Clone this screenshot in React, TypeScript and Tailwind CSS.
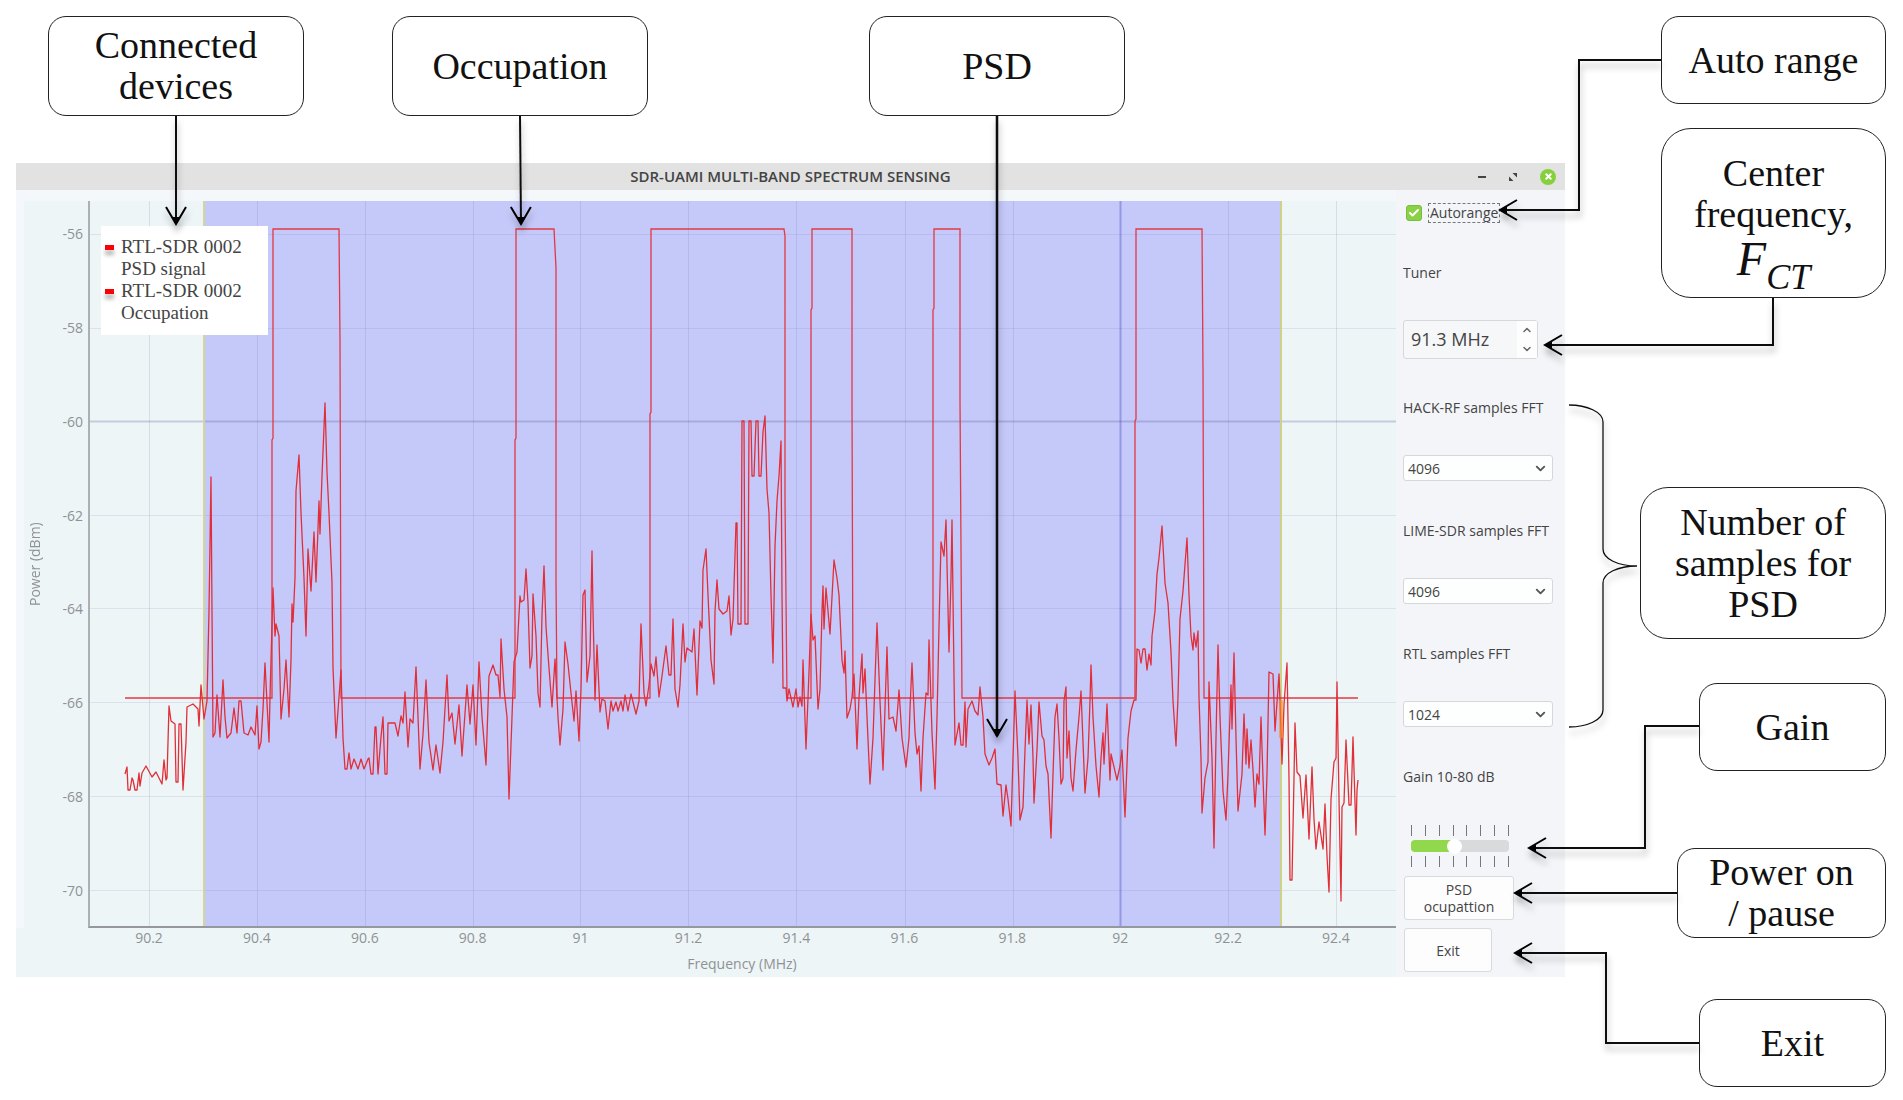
import React, { useState } from 'react';
import { ChevronDown, ChevronUp, Check, X } from 'lucide-react';

const POWER_TICKS = [
    { label: '-56', y: 234 },
    { label: '-58', y: 328 },
    { label: '-60', y: 421, major: true },
    { label: '-62', y: 515 },
    { label: '-64', y: 608 },
    { label: '-66', y: 702 },
    { label: '-68', y: 796 },
    { label: '-70', y: 890 },
];

const FREQ_TICKS = [
    { label: '90.2', x: 149 },
    { label: '90.4', x: 257 },
    { label: '90.6', x: 365 },
    { label: '90.8', x: 473 },
    { label: '91', x: 580 },
    { label: '91.2', x: 688 },
    { label: '91.4', x: 796 },
    { label: '91.6', x: 905 },
    { label: '91.8', x: 1013 },
    { label: '92', x: 1120, major: true },
    { label: '92.2', x: 1228 },
    { label: '92.4', x: 1336 },
];

const OCCUPATION =
    '125,698 272,698 272,440 273,438 273,229 339,229 340,340 341,698 515,698 515,440 516,438 516,229 ' +
    '554,229 556,268 556,580 557,698 650,698 650,414 651,412 651,229 784,229 785,236 785,500 787,698 ' +
    '811,698 811,310 812,308 812,229 852,229 852,405 853,698 933,698 933,310 934,308 934,229 ' +
    '960,229 960,400 962,698 1135,698 1135,421 1136,419 1136,229 1202,229 1203,370 1204,698 1358,698';

const PSD_SIGNAL = [
    '125,774 127,767 128,790 130,790 132,778 133,780 135,790 137,790 139,773 140,786 142,773 146,766 152,777 156,772',
    '162,784 164,760 166,780 167,778 169,706 171,721 175,724 176,782 178,782 179,724 181,724 183,790 186,742 187,707',
    '193,704 198,709 199,726 201,685 204,719 207,701 209,611 211,477 212,611 213,737 215,733 217,695 220,737 223,680',
    '225,717 227,738 231,733 234,708 237,733 239,701 241,701 244,733 248,735 251,727 255,735 257,706 259,749 261,742',
    '263,709 265,663 269,742 270,697 273,588 275,636 276,624 279,636 281,719 284,689 286,660 289,717 291,660 292,604',
    '293,622 295,578 296,491 299,455 301,513 304,578 306,636 308,549 311,591 314,532 316,582 319,501 320,534 322,476',
    '325,403 327,472 329,513 332,583 333,668 336,738 339,697 341,670 343,738 345,769 347,769 349,753 351,769 354,759',
    '358,769 361,759 364,769 368,759 369,758 371,774 373,774 375,727 376,727 378,774 381,737 383,717 385,774 387,774',
    '388,723 395,723 398,736 401,716 403,723 405,692 408,747 410,719 413,723 416,667 418,717 420,769 423,734 426,680',
    '429,742 433,770 436,745 440,773 443,742 447,675 449,721 452,713 455,744 459,705 462,756 467,685 470,724 473,685',
    '476,745 479,662 482,717 486,765 489,676 493,665 496,675 498,675 500,697 501,639 504,689 507,717 509,799 512,717',
    '514,662 517,652 520,596 521,602 524,600 526,569 528,603 530,668 532,656 533,594 536,636 538,693 540,707 542,615',
    '544,566 546,627 549,668 552,707 555,659 558,717 560,745 563,709 565,642 568,664 571,693 574,721 576,691 579,741',
    '581,689 583,595 585,590 587,682 590,656 592,551 593,611 595,700 597,645 600,712 602,699 605,701 608,729 611,701',
    '613,711 616,702 618,711 621,701 623,711 625,695 628,711 631,694 636,714 639,701 641,624 644,693 646,706 649,685',
    '651,664 654,676 656,657 659,697 662,676 666,646 669,675 671,675 673,619 675,689 678,707 680,685 683,624 685,662',
    '687,648 692,652 694,629 697,695 700,621 702,628 703,570 706,549 708,595 711,660 714,684 715,611 717,580 719,609',
    '723,614 727,611 729,596 731,635 733,619 736,523 737,523 738,624 741,624 742,421 744,421 745,624 748,624 749,421',
    '751,421 752,476 754,476 756,421 758,421 759,476 761,476 763,432 765,416 767,489 769,513 771,595 773,663 775,546',
    '777,501 779,476 781,441 782,595 783,688 786,688 787,701 789,689 793,707 796,689 798,707 800,697 802,706 803,660',
    '806,749 809,672 811,614 813,640 815,636 818,709 820,689 822,611 823,586 824,629 826,588 830,634 834,560 837,578',
    '839,595 842,660 844,673 845,651 847,718 850,709 852,697 854,674 857,749 859,697 862,654 863,693 865,669 867,717',
    '870,784 873,738 875,680 877,623 880,701 883,770 887,647 889,719 893,717 896,731 899,690 902,738 906,767 909,738',
    '910,709 912,663 915,733 917,754 919,746 921,791 923,738 926,693 928,695 929,640 932,733 935,789 937,717 939,627',
    '941,542 944,556 946,520 949,652 951,578 952,520 954,676 955,745 959,723 961,745 963,745 965,702 966,747 968,709',
    '972,701 975,711 978,715 980,687 983,717 985,754 989,765 992,758 995,749 997,784 1001,785 1003,816 1006,785',
    '1008,799 1011,826 1013,758 1015,691 1018,758 1020,820 1023,807 1025,750 1027,700 1029,744 1031,705 1033,758',
    '1034,803 1037,750 1039,702 1042,736 1044,740 1046,766 1048,774 1051,838 1053,774 1055,717 1057,704 1059,738',
    '1061,784 1063,778 1064,701 1066,687 1067,758 1069,731 1071,778 1073,791 1076,750 1079,717 1081,691 1083,742',
    '1085,793 1088,758 1090,701 1091,665 1093,717 1096,766 1099,797 1101,758 1103,733 1104,764 1107,704 1110,780',
    '1111,754 1117,780 1120,766 1122,750 1125,817 1128,738 1131,711 1134,700 1136,700 1137,649 1139,650 1141,663',
    '1143,649 1145,649 1147,670 1149,654 1151,665 1152,636 1155,611 1157,574 1159,558 1162,526 1165,583 1168,603',
    '1171,652 1173,701 1176,746 1178,697 1180,619 1183,591 1187,538 1189,595 1191,636 1193,650 1194,633 1196,647',
    '1198,631 1199,697 1201,758 1202,813 1205,778 1208,762 1209,682 1212,758 1214,848 1216,738 1218,645 1220,717',
    '1223,791 1226,820 1228,774 1231,685 1232,729 1234,653 1236,738 1238,811 1242,774 1244,714 1246,764 1247,729',
    '1249,768 1251,740 1253,770 1255,807 1257,774 1259,784 1261,717 1263,778 1265,835 1267,774 1269,672 1273,674',
    '1275,731 1279,674 1280,701 1282,764 1284,705 1287,663 1289,778 1290,880 1292,880 1294,778 1295,723 1297,772',
    '1300,776 1303,818 1306,775 1309,839 1312,767 1314,819 1316,849 1319,822 1323,849 1325,804 1327,856 1329,892',
    '1331,799 1334,762 1336,758 1337,682 1339,799 1341,901 1342,807 1344,803 1346,740 1349,805 1351,805 1353,737',
    '1356,835 1357,790 1358,780',
].join(' ');

const SpectrumPlot: React.FC = () => (
    <svg
        className="block h-full w-full"
        viewBox="90 201 1306 725"
        preserveAspectRatio="none"
        role="img"
        aria-label="Power spectral density"
    >
        <rect x="204" y="201" width="1077" height="727" fill="#c5c9fa" />
        {POWER_TICKS.map((t) => (
            <line
                key={t.label}
                x1="90"
                x2="1396"
                y1={t.y + 0.5}
                y2={t.y + 0.5}
                stroke={t.major ? '#50508c' : '#5a5a96'}
                strokeOpacity={t.major ? 0.25 : 0.12}
                strokeWidth={t.major ? 2 : 1}
            />
        ))}
        {FREQ_TICKS.map((t) => (
            <line
                key={t.label}
                x1={t.x + 0.5}
                x2={t.x + 0.5}
                y1="201"
                y2="928"
                stroke={t.major ? '#3c3cb4' : '#5a5a96'}
                strokeOpacity={t.major ? 0.35 : 0.15}
                strokeWidth={t.major ? 2 : 1}
            />
        ))}
        <line x1="204" x2="204" y1="201" y2="928" stroke="#d3d69c" strokeWidth="2" />
        <line x1="1281" x2="1281" y1="201" y2="928" stroke="#cdd287" strokeWidth="2" />
        <polyline points={OCCUPATION} fill="none" stroke="#e33843" strokeWidth="1.3" />
        <polyline points={PSD_SIGNAL} fill="none" stroke="#e12f39" strokeWidth="1.3" strokeLinejoin="round" />
        <rect x="1279" y="700" width="4" height="38" fill="#ff8c1a" fillOpacity="0.6" />
    </svg>
);

const Callout: React.FC<{ className: string; children: React.ReactNode }> = ({ className, children }) => (
    <div
        className={`flex shrink-0 justify-center border border-[#222] bg-white text-center font-['Liberation_Serif',serif] text-[38px] leading-[41px] text-[#111] ${className}`}
    >
        {children}
    </div>
);

const LegendItem: React.FC<{ device: string; kind: string }> = ({ device, kind }) => (
    <li className="flex gap-[7px]">
        <span className="mt-[9px] h-[5px] w-[9px] shrink-0 bg-[#fb0007] shadow-[0_5px_4px_rgba(0,0,0,0.3)]" />
        <span>
            {device}
            <br />
            {kind}
        </span>
    </li>
);

const SampleSelect: React.FC<{ id: string; label: string; initial: string }> = ({ id, label, initial }) => {
    const [value, setValue] = useState(initial);
    return (
        <div className="flex flex-col gap-[37px]">
            <label htmlFor={id} className="h-5 leading-5 whitespace-nowrap">
                {label}
            </label>
            <div className="relative mr-3">
                <select
                    id={id}
                    value={value}
                    onChange={(e) => setValue(e.target.value)}
                    className="block h-[26px] w-full appearance-none rounded-[3px] border border-[#d6d7da] bg-[#fdfefe] pl-1"
                >
                    <option>1024</option>
                    <option>2048</option>
                    <option>4096</option>
                </select>
                <ChevronDown
                    size={15}
                    strokeWidth={3}
                    className="pointer-events-none absolute top-[6px] right-[5px] text-[#555]"
                />
            </div>
        </div>
    );
};

const TickRow: React.FC = () => (
    <div className="flex w-[98px] justify-between">
        {[10, 20, 30, 40, 50, 60, 70, 80].map((gain) => (
            <span key={gain} className="h-[11px] w-px bg-[#777]" />
        ))}
    </div>
);

const ControlPanel: React.FC = () => {
    const [autorange, setAutorange] = useState(true);
    const [tuner, setTuner] = useState(91.3);
    const [gain, setGain] = useState(40);

    return (
        <aside className="flex w-[169px] shrink-0 flex-col bg-[#f4f5f9] pt-[13px] pb-1 pl-[7px]">
            <label className="relative flex h-5 items-center gap-[6px] pl-[3px]">
                <input
                    type="checkbox"
                    checked={autorange}
                    onChange={(e) => setAutorange(e.target.checked)}
                    className="size-4 appearance-none rounded-[3px] border border-[#79bd3d] bg-white checked:bg-[#8bd147]"
                />
                {autorange && (
                    <Check size={12} strokeWidth={4} className="pointer-events-none absolute left-[5px] text-white" />
                )}
                <span className="border border-dashed border-[#777] px-px leading-[18px]">Autorange</span>
            </label>

            <div className="mt-10 flex flex-col gap-[37px]">
                <label htmlFor="tuner" className="h-5 leading-5">
                    Tuner
                </label>
                <div className="flex h-[39px] w-[135px] rounded-[3px] border border-[#d6d7da] bg-[#f6f7f9]">
                    <input
                        id="tuner"
                        type="text"
                        readOnly
                        value={`${tuner.toFixed(1)} MHz`}
                        className="w-0 flex-1 bg-transparent pl-[7px] text-[18px]"
                    />
                    <div className="flex w-5 flex-col items-center justify-around bg-[#fdfdfe] text-[#666]">
                        <button type="button" aria-label="Increase" onClick={() => setTuner(tuner + 0.1)}>
                            <ChevronUp size={12} strokeWidth={3} />
                        </button>
                        <button type="button" aria-label="Decrease" onClick={() => setTuner(tuner - 0.1)}>
                            <ChevronDown size={12} strokeWidth={3} />
                        </button>
                    </div>
                </div>
            </div>

            <div className="mt-[39px] flex flex-col gap-10">
                <SampleSelect id="hackrf" label="HACK-RF samples FFT" initial="4096" />
                <SampleSelect id="lime" label="LIME-SDR samples FFT" initial="4096" />
                <SampleSelect id="rtl" label="RTL samples FFT" initial="1024" />
                <label htmlFor="gain" className="h-5 leading-5">
                    Gain 10-80 dB
                </label>
            </div>

            <div className="mt-[38px] flex flex-col gap-1 pl-2">
                <TickRow />
                <input
                    id="gain"
                    type="range"
                    min={10}
                    max={80}
                    step={10}
                    value={gain}
                    onChange={(e) => setGain(Number(e.target.value))}
                    className="block h-3 w-[98px] appearance-none rounded-[4px] [&::-webkit-slider-thumb]:size-[15px] [&::-webkit-slider-thumb]:appearance-none [&::-webkit-slider-thumb]:rounded-full [&::-webkit-slider-thumb]:bg-white"
                    style={{
                        background: `linear-gradient(to right, #92d84c ${((gain - 10) / 70) * 100}%, #d9dadc 0)`,
                    }}
                />
                <TickRow />
            </div>

            <div className="mt-[9px] flex flex-col items-start gap-2 pl-px">
                <button
                    type="button"
                    className="h-11 w-[110px] rounded-[3px] border border-[#d9dadd] bg-[#fdfdfe] leading-[17px]"
                >
                    PSD
                    <br />
                    ocupattion
                </button>
                <button type="button" className="h-11 w-[88px] rounded-[3px] border border-[#d9dadd] bg-[#fdfdfe]">
                    Exit
                </button>
            </div>
        </aside>
    );
};

const TitleBar: React.FC = () => (
    <header className="grid h-[27px] grid-cols-[1fr_auto_1fr] items-center bg-[#e2e2e2] text-[#444]">
        <h1 className="col-start-2 text-[15px] leading-[27px] font-semibold">SDR-UAMI MULTI-BAND SPECTRUM SENSING</h1>
        <div className="flex items-center justify-end gap-[22px] pr-[9px]">
            <button type="button" aria-label="Minimize" className="h-[2px] w-2 bg-[#444]" />
            <button type="button" aria-label="Maximize">
                <svg width="10" height="10" viewBox="0 0 10 10" fill="#444">
                    <path d="M4.5 1H9v4.500zM1 4.500V9h4.500z" />
                </svg>
            </button>
            <button
                type="button"
                aria-label="Close"
                className="flex size-4 items-center justify-center rounded-full bg-[#87d03c] text-white"
            >
                <X size={9} strokeWidth={5} />
            </button>
        </div>
    </header>
);

const SensingWindow: React.FC = () => (
    <section className="flex flex-col font-['Open_Sans',sans-serif] text-[14px] font-medium text-[#444]">
        <TitleBar />
        <div className="flex h-[787px]">
            <div className="grid min-w-0 flex-1 grid-cols-[72px_1fr] grid-rows-[727px_49px] border-t-[11px] border-[#f5f8fb] bg-[#edf5f7] text-[#8f9294]">
                <div className="flex justify-between border-l-8 border-[#f4f7fb] pr-[5px]">
                    <div className="flex rotate-180 items-center justify-center [writing-mode:vertical-rl]">
                        Power (dBm)
                    </div>
                    <div className="flex flex-col justify-between pt-6 pb-7 text-right leading-[18px]">
                        {POWER_TICKS.map((t) => (
                            <span key={t.label}>{t.label}</span>
                        ))}
                    </div>
                </div>
                <div className="relative border-b-2 border-l-2 border-b-[#96979f] border-l-[#adb0b2]">
                    <SpectrumPlot />
                    <ul className="absolute top-[25px] left-[11px] h-[109px] w-[167px] bg-white pt-[10px] pl-1 font-['Liberation_Serif',serif] text-[19px] leading-[22px] font-normal text-[#444]">
                        <LegendItem device="RTL-SDR 0002" kind="PSD signal" />
                        <LegendItem device="RTL-SDR 0002" kind="Occupation" />
                    </ul>
                </div>
                <div className="col-start-2 flex flex-col gap-[7px]">
                    <div className="flex justify-between pr-[38px] pl-[39px] leading-5">
                        {FREQ_TICKS.map((t) => (
                            <span key={t.label} className="w-11 text-center">
                                {t.label}
                            </span>
                        ))}
                    </div>
                    <div className="text-center leading-[18px]">Frequency (MHz)</div>
                </div>
            </div>
            <ControlPanel />
        </div>
    </section>
);

// Lines that tie each callout to the part of the window it names
const Connectors: React.FC = () => (
    <svg
        className="pointer-events-none absolute inset-0 h-full w-full"
        viewBox="0 0 1903 1100"
        preserveAspectRatio="none"
        aria-hidden="true"
    >
        <defs>
            <filter id="soft" filterUnits="userSpaceOnUse" x="0" y="0" width="1903" height="1100">
                <feDropShadow dx="1" dy="6" stdDeviation="3" floodColor="#000" floodOpacity="0.3" />
            </filter>
            <marker
                id="tip"
                markerUnits="userSpaceOnUse"
                markerWidth="24"
                markerHeight="26"
                refX="20"
                refY="13"
                orient="auto"
            >
                <path d="M3 3L20 13L3 23" fill="none" stroke="#000" strokeWidth="2" />
                <path d="M13 9.500L20 13L13 16.500z" />
            </marker>
        </defs>
        <g fill="none" stroke="#111" strokeWidth="2" filter="url(#soft)">
            <path d="M176 116V224" markerEnd="url(#tip)" />
            <path d="M520 116L521 224" markerEnd="url(#tip)" />
            <path d="M997 116V736" strokeWidth="2.500" markerEnd="url(#tip)" />
            <path d="M1661 60H1579V210H1500" markerEnd="url(#tip)" />
            <path d="M1773 298V345H1545" markerEnd="url(#tip)" />
            <path d="M1699 726H1645V848H1529" markerEnd="url(#tip)" />
            <path d="M1677 893H1515" markerEnd="url(#tip)" />
            <path d="M1699 1043H1606V953H1515" markerEnd="url(#tip)" />
            <path
                d="M1569 405C1587 405 1603 412 1603 422V549C1603 559 1618 566 1637 566C1618 566 1603 573 1603 583V710C1603 720 1587 727 1569 727"
                strokeWidth="1.3"
            />
        </g>
    </svg>
);

const App: React.FC = () => (
    <main className="relative flex min-h-[1100px] min-w-[1400px] bg-white">
        <div className="flex min-w-0 flex-1 flex-col pt-4 pl-4">
            <div className="flex pl-8">
                <Callout className="h-[100px] w-[256px] items-center rounded-[18px]">
                    Connected
                    <br />
                    devices
                </Callout>
                <Callout className="ml-[88px] h-[100px] w-[256px] items-center rounded-[18px]">Occupation</Callout>
                <Callout className="ml-[221px] h-[100px] w-[256px] items-center rounded-[18px]">PSD</Callout>
            </div>
            <div className="mt-[47px]">
                <SensingWindow />
            </div>
        </div>

        <div className="flex w-[338px] shrink-0 flex-col items-end pt-4 pr-[17px] pb-3">
            <Callout className="h-[88px] w-[225px] items-center rounded-[18px]">Auto range</Callout>
            <Callout className="mt-6 h-[170px] w-[225px] items-start rounded-[30px] pt-6">
                <div>
                    Center
                    <br />
                    frequency,
                    <div className="flex h-12 items-start justify-center italic">
                        <span className="text-[48px] leading-[48px]">F</span>
                        <sub className="static pt-[18px] text-[36px] leading-[48px]">CT</sub>
                    </div>
                </div>
            </Callout>
            <Callout className="mt-[189px] h-[152px] w-[246px] items-center rounded-[28px]">
                Number of
                <br />
                samples for
                <br />
                PSD
            </Callout>
            <Callout className="mt-11 h-[88px] w-[187px] items-center rounded-[18px]">Gain</Callout>
            <Callout className="mt-[77px] h-[90px] w-[209px] items-center rounded-[18px]">
                Power on
                <br />/ pause
            </Callout>
            <Callout className="mt-[61px] h-[88px] w-[187px] items-center rounded-[18px]">Exit</Callout>
        </div>

        <Connectors />
    </main>
);

export default App;
